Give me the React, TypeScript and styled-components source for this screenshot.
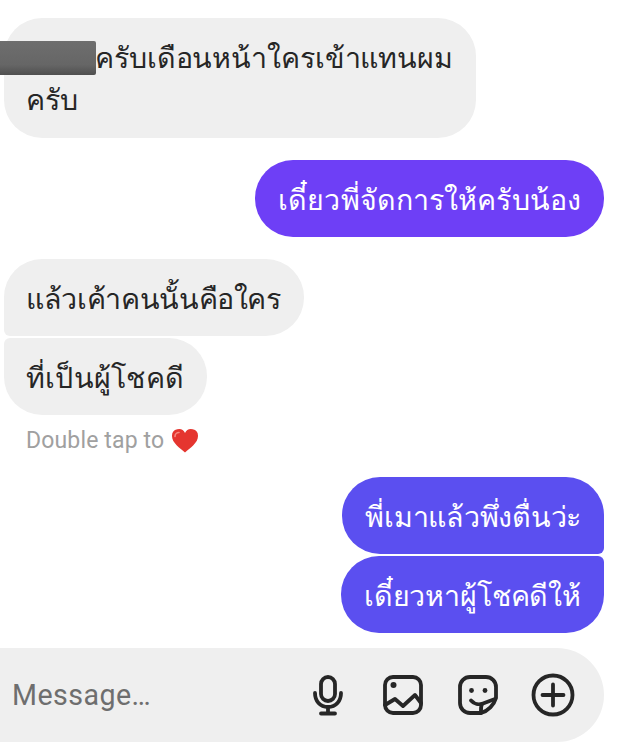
import React from "react";
import styled, { createGlobalStyle } from "styled-components";

const Global = createGlobalStyle`
  html, body { margin: 0; padding: 0; background: #fff; }
  body { width: 618px; height: 752px; overflow: hidden; font-family: "Noto Sans", "Noto Sans CJK SC", "Liberation Sans", sans-serif; }
`;
const Page = styled.div`
  width: 618px; height: 752px; box-sizing: border-box;
  padding: 18px 14px 10px 4px;
  display: flex; flex-direction: column;
`;
const Bubble = styled.div<{ $me?: boolean; $mt?: number; $track?: number; $tail?: "tr" | "br" | "tl" | "bl" }>`
  position: relative;
  align-self: ${(p) => (p.$me ? "flex-end" : "flex-start")};
  box-sizing: border-box;
  margin-top: ${(p) => p.$mt ?? 0}px;
  padding: 17.5px 23px 17.5px ${(p) => (p.$me ? 23 : 22)}px;
  line-height: 42px;
  font-size: 28.6px;
  font-weight: 300;
  letter-spacing: ${(p) => p.$track ?? 0}px;
  white-space: nowrap;
  color: ${(p) => (p.$me ? "#fff" : "#262626")};
  background: ${(p) => (p.$me ? "#5b4ff0" : "#efefef")};
  border-radius: 38px;
  ${(p) => p.$tail === "bl" && "border-bottom-left-radius: 6px;"}
  ${(p) => p.$tail === "tl" && "border-top-left-radius: 6px;"}
  ${(p) => p.$tail === "br" && "border-bottom-right-radius: 6px;"}
  ${(p) => p.$tail === "tr" && "border-top-right-radius: 6px;"}
`;
const FirstBubble = styled(Bubble)`
  padding-top: 18px; padding-bottom: 18px;
`;
const VioletBubble = styled(Bubble)`
  background: #6e3ff6;
`;
const Indent = styled.span`
  display: inline-block; width: 69px;
`;
const Redaction = styled.div`
  position: absolute; left: -4px; top: 23px; width: 96px; height: 34px;
  background: linear-gradient(180deg, #6e6e6e 0%, #666 70%, #4f4f4f 100%);
  border-radius: 0 2px 2px 0;
`;
const Hint = styled.div`
  display: flex; align-items: center; gap: 7px;
  margin: 13px 0 0 22px; height: 25px;
  font-family: Roboto, "Liberation Sans", sans-serif;
  font-size: 23px; letter-spacing: 0.15px; color: #a0a0a0;
`;
const Composer = styled.div`
  margin: 15px 0 0 -4px; height: 94px; width: 604px;
  box-sizing: border-box; padding: 0 29px 0 12px;
  display: flex; align-items: center; gap: 31px;
  background: #efefef;
  border-radius: 0 47px 47px 0;
`;
const Placeholder = styled.div`
  flex: 1;
  font-family: Roboto, "Liberation Sans", sans-serif;
  font-size: 28.6px; letter-spacing: 0.45px; color: #6e6e6e;
`;
const Icon = styled.svg`
  width: 44px; height: 44px; flex: none;
  fill: none; stroke: #262626; stroke-width: 3.8; stroke-linecap: round; stroke-linejoin: round;
`;
const Dot = styled.circle`
  fill: #262626; stroke: none;
`;

export default function App() {
  return (
    <Page>
      <Global />
      <FirstBubble $track={-0.1}>
        <Redaction />
        <Indent />ครับเดือนหน้าใครเข้าแทนผม<br />ครับ
      </FirstBubble>
      <VioletBubble $me $mt={22} $track={0.1}>เดี๋ยวพี่จัดการให้ครับน้อง</VioletBubble>
      <Bubble $mt={22} $tail="bl" $track={-0.35}>แล้วเค้าคนนั้นคือใคร</Bubble>
      <Bubble $mt={2} $tail="tl" $track={0.22}>ที่เป็นผู้โชคดี</Bubble>
      <Hint>
        Double tap to
        <svg width="28" height="25" viewBox="0 0 28 25" aria-hidden="true">
          <path d="M14 24.5C9 20 1 15 1 8a6.8 6.8 0 0 1 13-3 6.8 6.8 0 0 1 13 3c0 7-8 12-13 16.5z" fill="#e5352f" />
          <path d="M4 8.5C4 6 6 4.5 8 4.5" fill="none" stroke="#f58a80" strokeWidth="1.6" strokeLinecap="round" />
        </svg>
      </Hint>
      <Bubble $me $mt={24} $tail="br" $track={-0.25}>พี่เมาแล้วพึ่งตื่นว่ะ</Bubble>
      <Bubble $me $mt={2} $tail="tr" $track={-0.15}>เดี๋ยวหาผู้โชคดีให้</Bubble>
      <Composer>
        <Placeholder>Message…</Placeholder>
        <Icon viewBox="0 0 44 44">
          <rect x="15" y="4" width="14" height="24" rx="7" />
          <path d="M9 20c0 8 5 14 13 14s13-6 13-14M22 34v6.5M15 40.5h14" />
        </Icon>
        <Icon viewBox="0 0 44 44">
          <rect x="4" y="4" width="36" height="36" rx="8" />
          <Dot cx="12.5" cy="12" r="3" />
          <path d="M4 32l10-6 8 7 12-11 6 8" />
        </Icon>
        <Icon viewBox="0 0 44 44">
          <path d="M25 40H14A10 10 0 0 1 4 30V14A10 10 0 0 1 14 4h16a10 10 0 0 1 10 10v11C38 32 32 38 25 40z" />
          <path d="M15 27.5C18 31 23 32 27 30.5L39 26" />
          <path d="M25 40c0-3-.5-6 1-9" />
          <Dot cx="15.5" cy="17.5" r="2.4" />
          <Dot cx="29" cy="17.5" r="2.4" />
        </Icon>
        <Icon viewBox="0 0 44 44">
          <circle cx="22" cy="22" r="19.5" />
          <path d="M11.5 22h21M22 11.5v21" />
        </Icon>
      </Composer>
    </Page>
  );
}
